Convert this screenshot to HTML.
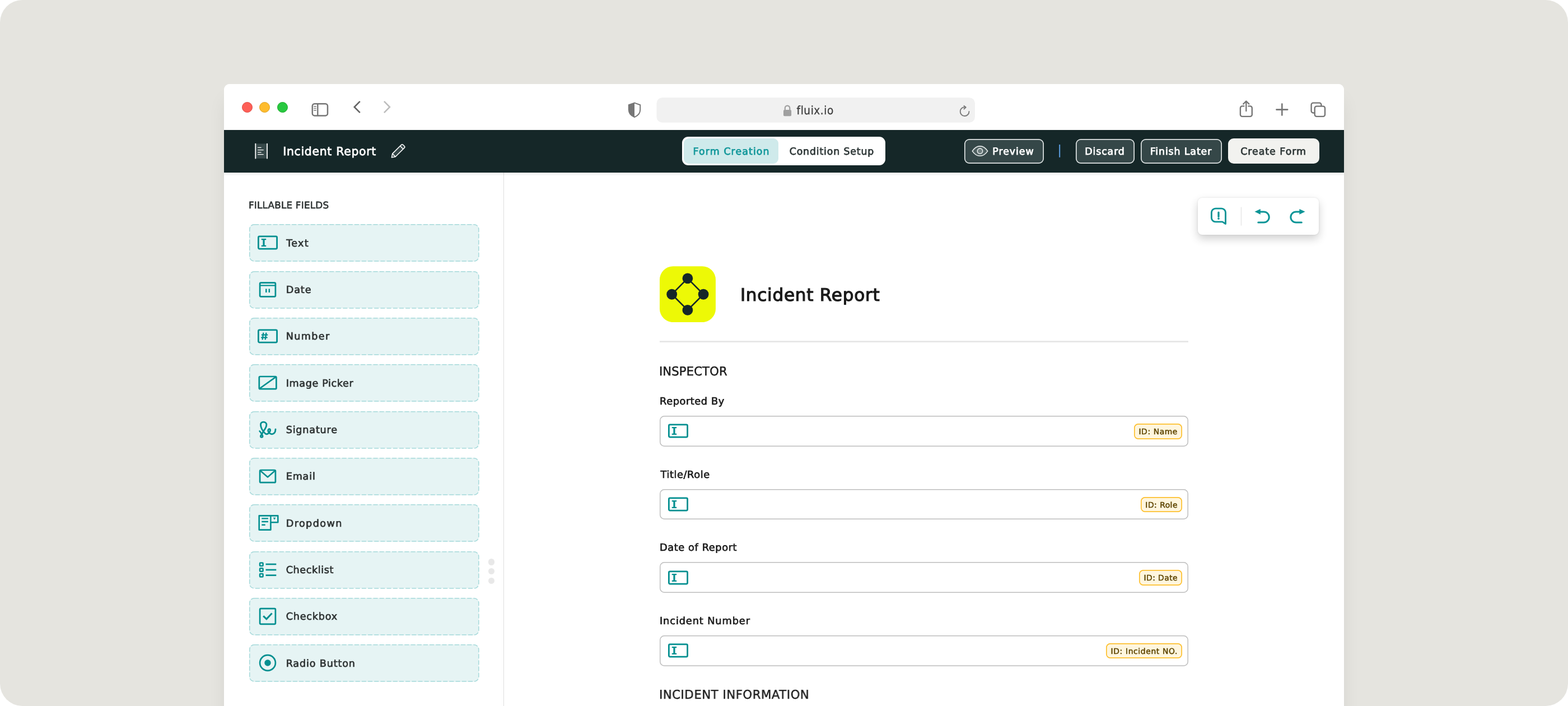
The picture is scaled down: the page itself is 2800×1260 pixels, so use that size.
<!DOCTYPE html>
<html lang="en">
<head>
<meta charset="utf-8">
<title>Incident Report – Form Creation</title>
<style>
*{box-sizing:border-box;margin:0;padding:0}
html,body{width:2800px;height:1260px;overflow:hidden;background:#fff}
body{text-rendering:geometricPrecision;font-family:"DejaVu Sans Condensed","Liberation Sans",sans-serif;color:#2b3435;position:relative}
.abs{position:absolute}
.stage{will-change:transform;position:absolute;left:0;top:0;width:2800px;height:1260px;background:#e5e4df;border-radius:40px;overflow:hidden}
.win{position:absolute;left:400px;top:150px;width:2000px;height:1130px;background:#fff;border-radius:10px 10px 0 0;box-shadow:0 24px 36px -6px rgba(0,0,0,.09);overflow:hidden}
/* all children of .win are positioned relative to window (offset 400,150) */
.chrome{position:absolute;left:0;top:0;width:2000px;height:82px;background:#fff}
.tl{position:absolute;top:31.700px;width:19px;height:19px;border-radius:50%}
.nav{position:absolute;left:0;top:82px;width:2000px;height:76px;background:#152728;box-shadow:0 2px 5px rgba(0,0,0,.12);z-index:5}
.sb{position:absolute;left:0;top:158px;width:500.100px;height:980px;background:#fff;border-right:1px solid #dedede}
.sem{font-family:"DejaVu Sans","Liberation Sans",sans-serif;-webkit-text-stroke:.55px currentColor}
.nb{top:15.500px;height:44.400px;background:#354748;box-shadow:inset 0 0 0 1.700px #dfe4e4;border-radius:9px;z-index:0}
.t{position:absolute;white-space:nowrap;line-height:1}
.fi{position:absolute;left:44.800px;width:410.600px;height:66.700px;background:#e6f4f4;border-radius:8.800px}
.fi svg.bd{position:absolute;left:0;top:0}
.fi .lb{position:absolute;left:65.900px;top:26.500px;font-family:"DejaVu Sans","Liberation Sans",sans-serif;font-size:17.600px;line-height:1;letter-spacing:0;color:#2e3333;white-space:nowrap;-webkit-text-stroke:.7px #2e3333}
.fi .ic{position:absolute;left:12.900px;top:15.300px;width:40px;height:36px}

.sb-h{font-family:"DejaVu Sans","Liberation Sans",sans-serif;font-size:16.800px;letter-spacing:.22px;color:#2e3333;-webkit-text-stroke:.6px #2e3333}
.dot{position:absolute;left:472.100px;width:11.400px;height:11.400px;border-radius:50%;background:#e8e8e8}

.tb{background:#fff;border-radius:8px;box-shadow:0 7px 16px rgba(0,0,0,.19),0 0 3px rgba(0,0,0,.10)}
.ttl{font-family:"DejaVu Sans","Liberation Sans",sans-serif;font-size:31.200px;letter-spacing:.7px;color:#1b1b1b;-webkit-text-stroke:1.200px #1b1b1b}
.sec{font-family:"DejaVu Sans","Liberation Sans",sans-serif;font-size:21.700px;color:#1b1b1b;-webkit-text-stroke:.5px #1b1b1b;transform:scaleX(.975);transform-origin:0 50%}
.fl{font-family:"DejaVu Sans","Liberation Sans",sans-serif;font-size:17.800px;letter-spacing:.4px;color:#1b1b1b;-webkit-text-stroke:.7px #1b1b1b}
.inp{width:944.100px;height:54.700px;box-shadow:inset 0 0 0 1.500px #bdbdbd;border-radius:8.300px;background:#fff}
.idb{position:absolute;right:10.600px;top:13.900px;height:27.600px;padding:0 8.400px 0 8.600px;box-shadow:inset 0 0 0 1.700px #fdc02f;border-radius:7.500px;background:#fff6de;font-family:"DejaVu Sans","Liberation Sans",sans-serif;font-size:13.900px;line-height:30.900px;letter-spacing:0px;color:#5e4500;white-space:nowrap;-webkit-text-stroke:.5px #5e4500}
</style>
</head>
<body>
<div class="stage">
<div class="win">

<!-- ============ browser chrome ============ -->
<div class="chrome" id="chrome">
  <div class="tl" style="left:31.500px;background:#fe5f57;border:1px solid #df4a43"></div>
  <div class="tl" style="left:63.100px;background:#febc2e;border:1px solid #dea123"></div>
  <div class="tl" style="left:94.800px;background:#28c840;border:1px solid #1aab29"></div>
  <svg class="abs" style="left:0;top:0" width="2000" height="82" viewBox="0 0 2000 82" fill="none">
    <!-- sidebar toggle -->
    <rect x="157.8" y="35.2" width="27.2" height="21.2" rx="4" stroke="#757575" stroke-width="2.5"/>
    <line x1="167.3" y1="35.2" x2="167.3" y2="56.4" stroke="#757575" stroke-width="2.4"/>
    <path d="M160.8 40h3.5M160.8 43.4h3.5M160.8 46.8h3.5" stroke="#757575" stroke-width="1.4" stroke-linecap="round"/>
    <!-- back / forward -->
    <polyline points="242.8,30.9 232.8,41 242.8,51.1" stroke="#636363" stroke-width="2.6"/>
    <polyline points="285.9,30.9 295.9,41 285.9,51.1" stroke="#bdbdbd" stroke-width="2.6"/>
    <!-- shield -->
    <path d="M733 33.6l-10.2 3.6v8.6c0 6.6 4.3 10.9 10.2 13.2 5.900-2.300 10.200-6.600 10.200-13.200v-8.600z" stroke="#767676" stroke-width="2" stroke-linejoin="round"/>
    <path d="M733 33.600l-10.200 3.600v8.600c0 6.600 4.300 10.900 10.200 13.200z" fill="#767676"/>
    <!-- url bar -->
    <rect x="772.500" y="24.200" width="568.500" height="44.600" rx="10" fill="#f1f1f1"/>
    <rect x="999" y="46" width="14.100" height="11.300" rx="2" fill="#a0a0a0"/>
    <path d="M1001.800 46.500v-3.600a4.250 4.250 0 0 1 8.500 0v3.600" stroke="#a0a0a0" stroke-width="2.200"/>
    <!-- reload -->
    <path d="M1323.800 41.300a7.900 7.900 0 1 0 6.700 7.700" stroke="#7a7a7a" stroke-width="1.900" stroke-linecap="round"/>
    <path d="M1321.500 38.900l3.300 2.600-3.300 3" stroke="#7a7a7a" stroke-width="1.900" stroke-linecap="round" stroke-linejoin="round"/>
    <!-- share -->
    <path d="M1821.300 39.400h-2.900a3.500 3.500 0 0 0-3.500 3.500v11.500a3.500 3.500 0 0 0 3.500 3.500h13.900a3.500 3.500 0 0 0 3.500-3.500v-11.500a3.500 3.500 0 0 0-3.500-3.500h-2.900" stroke="#767676" stroke-width="2.400" stroke-linecap="round"/>
    <path d="M1825.300 30.600v17.600M1820.200 35.600l5.100-5.100 5.100 5.100" stroke="#767676" stroke-width="2.300" stroke-linecap="round" stroke-linejoin="round"/>
    <!-- plus -->
    <path d="M1879.400 45.600h19.800M1889.300 35.600v19.900" stroke="#767676" stroke-width="2.600" stroke-linecap="round"/>
    <!-- tabs -->
    <rect x="1941.600" y="33.600" width="17.800" height="17.900" rx="3.500" stroke="#767676" stroke-width="2.400"/>
    <rect x="1947.700" y="39.600" width="18.300" height="18.300" rx="3.500" stroke="#767676" stroke-width="2.400" fill="#fff"/>
  </svg>
  <div class="t" style="left:1022.600px;top:37.000px;font-size:20.600px;color:#3c3c3c;letter-spacing:.55px;-webkit-text-stroke:.25px #3c3c3c">fluix.io</div>
</div>

<!-- ============ app nav ============ -->
<div class="nav" id="nav">
  <div class="t sem" style="left:105.200px;top:27.720px;font-size:20.400px;color:#fff;letter-spacing:0.70px;-webkit-text-stroke:.75px #fff">Incident Report</div>

  <div class="abs" style="left:817.900px;top:12.300px;width:362.800px;height:50.500px;background:#fff;border-radius:11px"></div>
  <div class="abs" style="left:821px;top:15.100px;width:169.200px;height:44.900px;background:#cfeaeb;border-radius:9px"></div>
  <div class="t sem" style="left:837.6px;top:30.900px;font-size:17.400px;color:#14989b;letter-spacing:1.09px;-webkit-text-stroke:.75px #14989b">Form Creation</div>
  <div class="t sem" style="left:1009.7px;top:30.900px;font-size:17.400px;color:#2f3838;letter-spacing:0.82px;-webkit-text-stroke:.75px #2f3838">Condition Setup</div>

  <div class="abs nb" style="left:1322.200px;width:141.900px"></div>
  <div class="t sem" style="left:1372.3px;top:30.900px;font-size:17.400px;color:#fff;letter-spacing:0.96px;-webkit-text-stroke:.75px #fff">Preview</div>
  <div class="abs nb" style="left:1521px;width:105.200px"></div>
  <div class="t sem" style="left:1537.2px;top:30.900px;font-size:17.400px;color:#fff;letter-spacing:0.89px;-webkit-text-stroke:.75px #fff">Discard</div>
  <div class="abs nb" style="left:1637.400px;width:144.900px"></div>
  <div class="t sem" style="left:1653.7px;top:30.900px;font-size:17.400px;color:#fff;letter-spacing:0.87px;-webkit-text-stroke:.75px #fff">Finish Later</div>
  <div class="abs" style="left:1792.900px;top:15.200px;width:163px;height:44.700px;background:#f2f2ef;border-radius:10px"></div>
  <div class="t sem" style="left:1815.2px;top:30.900px;font-size:17.400px;color:#2f3838;letter-spacing:0.97px;-webkit-text-stroke:.75px #2f3838">Create Form</div>
  <svg class="abs" style="left:0;top:0" width="2000" height="76" viewBox="0 0 2000 76" fill="none">
    <!-- doc icon -->
    <rect x="57" y="24.400" width="19.300" height="26.500" fill="#364849"/>
    <rect x="55.400" y="23.900" width="1.800" height="27.500" fill="#fff"/>
    <rect x="76.100" y="23.900" width="1.800" height="27.500" fill="#fff"/>
    <path d="M60.100 31.300h6.500M60.100 35.700h10.600M60.100 39.800h6.500M60.100 43.700h10.600" stroke="#fff" stroke-width="1.300"/>
    <!-- pencil -->
    <g transform="translate(309.900 38.600) rotate(45) scale(.915)" stroke="#fff" stroke-width="1.700" stroke-linejoin="round">
      <path d="M-4.200 -14.500 a2.500 2.500 0 0 1 2.500 -2.500 h3.400 a2.500 2.500 0 0 1 2.500 2.500 v24.500 l-4.200 6.200 l-4.200 -6.200 z" fill="#364849"/>
      <path d="M-4.200 -11.300 h8.400 M-4.200 10 h8.400"/>
    </g>
    <!-- divider -->
    <rect x="1491.200" y="26" width="2" height="22.800" fill="#5c9fe0"/>
    <!-- eye -->
    <path d="M1336.300 37.600c3.700-5.300 8.300-8.700 13.700-8.700s10 3.400 13.700 8.700c-3.700 5.300-8.300 8.700-13.700 8.700s-10-3.400-13.700-8.700z" stroke="#e6eaea" stroke-width="1.600" fill="#4f6061"/>
    <circle cx="1350" cy="37.600" r="4.700" stroke="#e6eaea" stroke-width="1.600" fill="#6e7d7e"/>
  </svg>
</div>

<!-- ============ sidebar ============ -->
<div class="sb" id="sb">
  <div class="t sb-h" style="left:43.900px;top:50.340px">FILLABLE FIELDS</div>
  <div class="fi" style="top:92.20px"><svg class="bd" width="411" height="67" viewBox="0 0 411 67" fill="none"><rect x=".75" y=".75" width="409.100" height="65.200" rx="8.300" stroke="#a5d9da" stroke-width="1.500" stroke-dasharray="8.100 3.080"/></svg><svg class="ic" viewBox="0 0 40 36" fill="none"><rect x="3.4" y="6.9" width="33.2" height="22.2" rx="2" stroke="#038f90" stroke-width="2.8"/><path d="M8.8 11h8.400v2.300h-2.600v9.400h2.600v2.300h-8.400v-2.300h2.600v-9.400h-2.600z" fill="#038f90"/></svg><span class="lb" style="letter-spacing:1.27px;margin-left:.6px">Text</span></div>
  <div class="fi" style="top:175.53px"><svg class="bd" width="411" height="67" viewBox="0 0 411 67" fill="none"><rect x=".75" y=".75" width="409.100" height="65.200" rx="8.300" stroke="#a5d9da" stroke-width="1.500" stroke-dasharray="8.100 3.080"/></svg><svg class="ic" viewBox="0 0 40 36" fill="none"><rect x="6.1" y="5.6" width="27.800" height="24.800" rx="1.800" stroke="#038f90" stroke-width="2.700"/><path d="M6.100 10.500h27.800" stroke="#038f90" stroke-width="2.200"/><path d="M17.300 16.500v6.400M22.800 16.500v6.400" stroke="#038f90" stroke-width="2.500"/></svg><span class="lb" style="letter-spacing:0.91px">Date</span></div>
  <div class="fi" style="top:258.87px"><svg class="bd" width="411" height="67" viewBox="0 0 411 67" fill="none"><rect x=".75" y=".75" width="409.100" height="65.200" rx="8.300" stroke="#a5d9da" stroke-width="1.500" stroke-dasharray="8.100 3.080"/></svg><svg class="ic" viewBox="0 0 40 36" fill="none"><rect x="3.400" y="6.900" width="33.200" height="22.200" rx="2" stroke="#038f90" stroke-width="2.800"/><path d="M12.400 11.700l-1.800 12.600M17.400 11.700l-1.800 12.600M8.900 15.600h11.400M8.200 20.400h11.400" stroke="#038f90" stroke-width="2.300"/></svg><span class="lb" style="letter-spacing:1.37px">Number</span></div>
  <div class="fi" style="top:342.20px"><svg class="bd" width="411" height="67" viewBox="0 0 411 67" fill="none"><rect x=".75" y=".75" width="409.100" height="65.200" rx="8.300" stroke="#a5d9da" stroke-width="1.500" stroke-dasharray="8.100 3.080"/></svg><svg class="ic" viewBox="0 0 40 36" fill="none"><rect x="4.800" y="7" width="30.600" height="22.200" rx="1.800" stroke="#038f90" stroke-width="2.700"/><path d="M5.500 28.500l29.200-20.800" stroke="#038f90" stroke-width="2.700"/></svg><span class="lb" style="letter-spacing:0.63px">Image Picker</span></div>
  <div class="fi" style="top:425.53px"><svg class="bd" width="411" height="67" viewBox="0 0 411 67" fill="none"><rect x=".75" y=".75" width="409.100" height="65.200" rx="8.300" stroke="#a5d9da" stroke-width="1.500" stroke-dasharray="8.100 3.080"/></svg><svg class="ic" viewBox="0 0 40 36" fill="none"><circle cx="9.2" cy="29.500" r="1.900" stroke="#038f90" stroke-width="2.600"/><path d="M5.600 20.400C7.200 21.700 8.600 23.800 9.400 26.800" stroke="#038f90" stroke-width="2.600" stroke-linecap="round"/><path d="M9.500 27.200C10 25 11 22.600 12.400 20.700C14.500 17.800 17.900 13.500 17.900 9.100C17.900 6 15.600 4.100 12.400 4.100C9.300 4.100 7.300 6 7.500 9.100C7.700 13.500 9.500 17.500 12.100 20.700C13.300 22.200 14.500 23.800 15.800 24.800C17.500 26.100 19.600 26 21.500 24.200C23.600 22.200 25 20 24.600 18.100C24.300 16.600 22.400 16.100 21.500 17.300C20.500 18.600 20.800 21 21.900 22.500C23 24 24.500 25.300 26.500 25.700C29 26.200 31.200 24.800 32.400 23.200C33.600 21.500 34 19.500 34 17.100" stroke="#038f90" stroke-width="2.800" stroke-linecap="round" stroke-linejoin="round"/></svg><span class="lb" style="letter-spacing:0.81px">Signature</span></div>
  <div class="fi" style="top:508.86px"><svg class="bd" width="411" height="67" viewBox="0 0 411 67" fill="none"><rect x=".75" y=".75" width="409.100" height="65.200" rx="8.300" stroke="#a5d9da" stroke-width="1.500" stroke-dasharray="8.100 3.080"/></svg><svg class="ic" viewBox="0 0 40 36" fill="none"><rect x="6.100" y="7" width="27.800" height="22.200" rx="1.800" stroke="#038f90" stroke-width="2.700"/><path d="M6.800 8l13.200 11.500 13.200-11.500" stroke="#038f90" stroke-width="2.500" stroke-linejoin="round"/></svg><span class="lb" style="letter-spacing:0.84px">Email</span></div>
  <div class="fi" style="top:592.20px"><svg class="bd" width="411" height="67" viewBox="0 0 411 67" fill="none"><rect x=".75" y=".75" width="409.100" height="65.200" rx="8.300" stroke="#a5d9da" stroke-width="1.500" stroke-dasharray="8.100 3.080"/></svg><svg class="ic" viewBox="0 0 40 36" fill="none"><path d="M4.700 5.400h33.600v11.800h-12.900v13.400h-20.700z" stroke="#038f90" stroke-width="2.600" stroke-linejoin="round"/><path d="M25.400 5.400v11.800" stroke="#038f90" stroke-width="2.400"/><path d="M9.300 10.400h11.600M9.300 16h11.600M9.300 21.800h6.400" stroke="#038f90" stroke-width="2.400"/><path d="M29.800 8.800h4.600l-2.300 4z" fill="#038f90"/></svg><span class="lb" style="letter-spacing:1.42px">Dropdown</span></div>
  <div class="fi" style="top:675.53px"><svg class="bd" width="411" height="67" viewBox="0 0 411 67" fill="none"><rect x=".75" y=".75" width="409.100" height="65.200" rx="8.300" stroke="#a5d9da" stroke-width="1.500" stroke-dasharray="8.100 3.080"/></svg><svg class="ic" viewBox="0 0 40 36" fill="none"><rect x="6" y="5.4" width="5.600" height="5.600" rx="1" stroke="#038f90" stroke-width="2.500"/><rect x="6" y="15.2" width="5.600" height="5.600" rx="1" stroke="#038f90" stroke-width="2.500"/><rect x="6" y="25" width="5.600" height="5.600" rx="1" stroke="#038f90" stroke-width="2.500"/><path d="M16.500 8h18.800" stroke="#038f90" stroke-width="2.700"/><path d="M16.500 18h18.800" stroke="#038f90" stroke-width="2.700"/><path d="M16.500 27.7h18.800" stroke="#038f90" stroke-width="2.700"/></svg><span class="lb" style="letter-spacing:0.60px">Checklist</span></div>
  <div class="fi" style="top:758.86px"><svg class="bd" width="411" height="67" viewBox="0 0 411 67" fill="none"><rect x=".75" y=".75" width="409.100" height="65.200" rx="8.300" stroke="#a5d9da" stroke-width="1.500" stroke-dasharray="8.100 3.080"/></svg><svg class="ic" viewBox="0 0 40 36" fill="none"><rect x="6.100" y="4.100" width="27.800" height="27.800" rx="1.800" stroke="#038f90" stroke-width="2.700"/><path d="M12.200 17.400l5.700 5.400 9.700-10.300" stroke="#038f90" stroke-width="3"/></svg><span class="lb" style="letter-spacing:0.80px">Checkbox</span></div>
  <div class="fi" style="top:842.20px"><svg class="bd" width="411" height="67" viewBox="0 0 411 67" fill="none"><rect x=".75" y=".75" width="409.100" height="65.200" rx="8.300" stroke="#a5d9da" stroke-width="1.500" stroke-dasharray="8.100 3.080"/></svg><svg class="ic" viewBox="0 0 40 36" fill="none"><circle cx="20" cy="18" r="13.900" stroke="#038f90" stroke-width="2.700"/><circle cx="20" cy="18" r="5.700" fill="#038f90"/></svg><span class="lb" style="letter-spacing:0.84px">Radio Button</span></div>
  <div class="dot" style="top:689.300px"></div><div class="dot" style="top:705.900px"></div><div class="dot" style="top:722.700px"></div>
</div>

<!-- ============ canvas ============ -->
<div class="abs" id="cv" style="left:502px;top:158px;width:1498px;height:980px;background:#fff">
  <div class="abs tb" style="left:1236.5px;top:45.2px;width:216px;height:65.600px">
    <svg class="abs" style="left:0;top:0" width="216" height="66" viewBox="2138.500 353.200 216 66" fill="none">
      <g transform="translate(-.8 0)"><path d="M2163.700 379.500a7.200 7.200 0 0 1 7.200-7.200h10.700a7.200 7.200 0 0 1 7.200 7.200v20.200l-5.600-3.600h-12.300a7.200 7.200 0 0 1-7.200-7.200z" stroke="#0b9496" stroke-width="2.900" stroke-linejoin="round"/>
      <path d="M2176.300 379.300v7.300" stroke="#0b9496" stroke-width="3.300" stroke-linecap="round"/><circle cx="2176.300" cy="390.300" r="1.900" fill="#0b9496"/>
      </g><rect x="2215.200" y="369.800" width="1.500" height="33" fill="#e6e6e6"/>
      <g transform="translate(-.9 0)"><path d="M2250.500 378.200h6.600a9.550 9.550 0 0 1 0 19.100h-9.900" stroke="#0b9496" stroke-width="3" stroke-linecap="round"/>
      <path d="M2240.900 377.900l10.300-4.700v9.800z" fill="#0b9496"/>
      </g><path d="M2320.500 378.200h-6.600a9.550 9.550 0 0 0 0 19.100h9.900" stroke="#0b9496" stroke-width="3" stroke-linecap="round"/>
      <path d="M2330.100 377.900l-10.300-4.700v9.800z" fill="#0b9496"/>
    </svg>
  </div>
  <svg class="abs" style="left:275.9px;top:167.0px" width="100" height="100.300" viewBox="0 0 100 100" fill="none">
    <rect width="100" height="100" rx="24" fill="#edf906"/>
    <path d="M49.900 21.700l28.200 28.400-28.200 28.200-28.200-28.200z" stroke="#152728" stroke-width="2.600"/>
    <circle cx="49.900" cy="21.700" r="9.400" fill="#152728"/><circle cx="21.700" cy="50.100" r="9.400" fill="#152728"/><circle cx="78.100" cy="50.100" r="9.400" fill="#152728"/><circle cx="49.900" cy="78.300" r="9.400" fill="#152728"/>
  </svg>
  <div class="t ttl" style="left:419.900px;top:203.600px">Incident Report</div>
  <svg class="abs" style="left:275px;top:300px" width="946" height="5" viewBox="0 0 946 5"><rect x=".9" y=".350" width="944.100" height="2.600" fill="#e5e5e5"/></svg>
  <div class="t sec" style="left:274.700px;top:345.000px;letter-spacing:0.13px">INSPECTOR</div>
  <div class="t fl" style="left:276.000px;top:400.14px;letter-spacing:0.57px">Reported By</div>
  <div class="abs inp" style="left:275.900px;top:434.20px"><svg class="abs" style="left:12.900px;top:9.200px" width="40" height="36" viewBox="0 0 40 36" fill="none"><rect x="3.400" y="6.900" width="33.200" height="22.200" rx="2" stroke="#038f90" stroke-width="2.800"/><path d="M8.800 11h8.400v2.300h-2.600v9.400h2.600v2.300h-8.400v-2.300h2.600v-9.400h-2.600z" fill="#038f90"/></svg><span class="idb" style="letter-spacing:0.59px">ID: Name</span></div>
  <div class="t fl" style="left:276.000px;top:530.74px;letter-spacing:0.58px;margin-left:1.500px">Title/Role</div>
  <div class="abs inp" style="left:275.900px;top:564.80px"><svg class="abs" style="left:12.900px;top:9.200px" width="40" height="36" viewBox="0 0 40 36" fill="none"><rect x="3.400" y="6.900" width="33.200" height="22.200" rx="2" stroke="#038f90" stroke-width="2.800"/><path d="M8.800 11h8.400v2.300h-2.600v9.400h2.600v2.300h-8.400v-2.300h2.600v-9.400h-2.600z" fill="#038f90"/></svg><span class="idb" style="letter-spacing:0.48px">ID: Role</span></div>
  <div class="t fl" style="left:276.000px;top:661.34px;letter-spacing:0.59px">Date of Report</div>
  <div class="abs inp" style="left:275.900px;top:695.40px"><svg class="abs" style="left:12.900px;top:9.200px" width="40" height="36" viewBox="0 0 40 36" fill="none"><rect x="3.400" y="6.900" width="33.200" height="22.200" rx="2" stroke="#038f90" stroke-width="2.800"/><path d="M8.800 11h8.400v2.300h-2.600v9.400h2.600v2.300h-8.400v-2.300h2.600v-9.400h-2.600z" fill="#038f90"/></svg><span class="idb" style="letter-spacing:0.42px">ID: Date</span></div>
  <div class="t fl" style="left:276.000px;top:791.94px;letter-spacing:0.87px">Incident Number</div>
  <div class="abs inp" style="left:275.900px;top:826.00px"><svg class="abs" style="left:12.900px;top:9.200px" width="40" height="36" viewBox="0 0 40 36" fill="none"><rect x="3.400" y="6.900" width="33.200" height="22.200" rx="2" stroke="#038f90" stroke-width="2.800"/><path d="M8.800 11h8.400v2.300h-2.600v9.400h2.600v2.300h-8.400v-2.300h2.600v-9.400h-2.600z" fill="#038f90"/></svg><span class="idb" style="letter-spacing:0.62px">ID: Incident NO.</span></div>
  <div class="t sec" style="left:274.900px;top:921.900px;letter-spacing:0.61px">INCIDENT INFORMATION</div>
</div>

</div>
</div>
</body>
</html>
